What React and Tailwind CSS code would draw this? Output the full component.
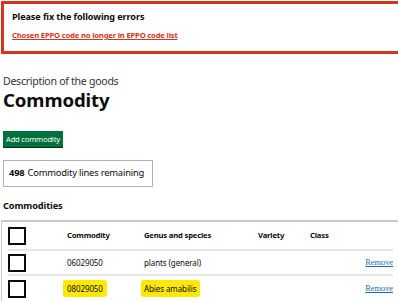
import React from "react";

const rows = [
  { code: "06029050", name: "plants (general)", marked: false },
  { code: "08029050", name: "Abies amabilis", marked: true },
];

const Box = () => (
  <div className="w-[18px] h-[18px] border-2 border-[#0b0c0c] bg-white" />
);

const App = () => {
  return (
    <div
      className="w-[398px] h-[302px] overflow-hidden bg-white text-[#0b0c0c]"
      style={{ fontFamily: '"Noto Sans", "Liberation Sans", sans-serif' }}
    >
      {/* Error summary */}
      <div className="mt-[1px] ml-[1px] w-[430px] h-[53px] border-[3px] border-[#d4351c] pl-[8px] pt-[7px]">
        <h2 className="text-[9.1px] font-bold leading-[12px] tracking-[-0.1px]">
          Please fix the following errors
        </h2>
        <a className="block mt-[7px] text-[7.7px] font-bold leading-[10px] text-[#d4351c] underline tracking-[-0.2px]">
          Chosen EPPO code no longer in EPPO code list
        </a>
      </div>

      <div className="pl-[3px]">
        <p className="mt-[20px] text-[10.6px] leading-[14px] text-[#333] tracking-[-0.3px]">
          Description of the goods
        </p>
        <h1 className="mt-[1px] text-[18.6px] font-bold leading-[22px] tracking-[-0.1px]">
          Commodity
        </h1>

        <button className="mt-[20px] h-[16px] px-[3px] bg-[#00703c] text-white text-[7.6px] leading-[16px] shadow-[0_1px_0_#002d18] tracking-[-0.2px]">
          Add commodity
        </button>

        <div className="mt-[12px] w-[150px] h-[27px] border border-[#b1b4b6] flex items-center pl-[5px] text-[9.4px] whitespace-nowrap tracking-[-0.2px]">
          <span className="font-bold mr-[3px]">498</span>Commodity lines remaining
        </div>

        <h2 className="mt-[13px] text-[9.2px] font-bold leading-[12px] tracking-[-0.1px]">
          Commodities
        </h2>
      </div>

      {/* Table */}
      <div className="mt-[8px] ml-[1px] border-l border-t-2 border-[#c8c8c8] pl-[6px] pr-[5px]">
        <div className="grid grid-cols-[59px_77px_114px_52px_1fr] items-center h-[29px] border-b-2 border-[#e6e6e6] text-[7.7px] font-bold tracking-[-0.2px]">
          <Box />
          <span>Commodity</span>
          <span>Genus and species</span>
          <span>Variety</span>
          <span>Class</span>
        </div>
        {rows.map((r) => (
          <div
            key={r.code}
            className="grid grid-cols-[59px_77px_114px_52px_1fr] items-center h-[25px] border-b-2 border-[#e6e6e6] last:border-b-0 text-[8px] tracking-[-0.1px]"
          >
            <Box />
            <span>
              <span
                className={
                  r.marked
                    ? "bg-[#ffe900] px-[4px] -ml-[4px] py-[3px] rounded-[3px]"
                    : ""
                }
              >
                {r.code}
              </span>
            </span>
            <span>
              <span
                className={
                  r.marked
                    ? "bg-[#ffe900] px-[3px] -ml-[3px] py-[3px] rounded-[3px]"
                    : ""
                }
              >
                {r.name}
              </span>
            </span>
            <span />
            <span className="text-right">
              <a
                className="text-[#1d70b8] underline text-[8.5px]"
                style={{ fontFamily: '"Liberation Serif", serif' }}
              >
                Remove
              </a>
            </span>
          </div>
        ))}
      </div>
    </div>
  );
};

export default App;
